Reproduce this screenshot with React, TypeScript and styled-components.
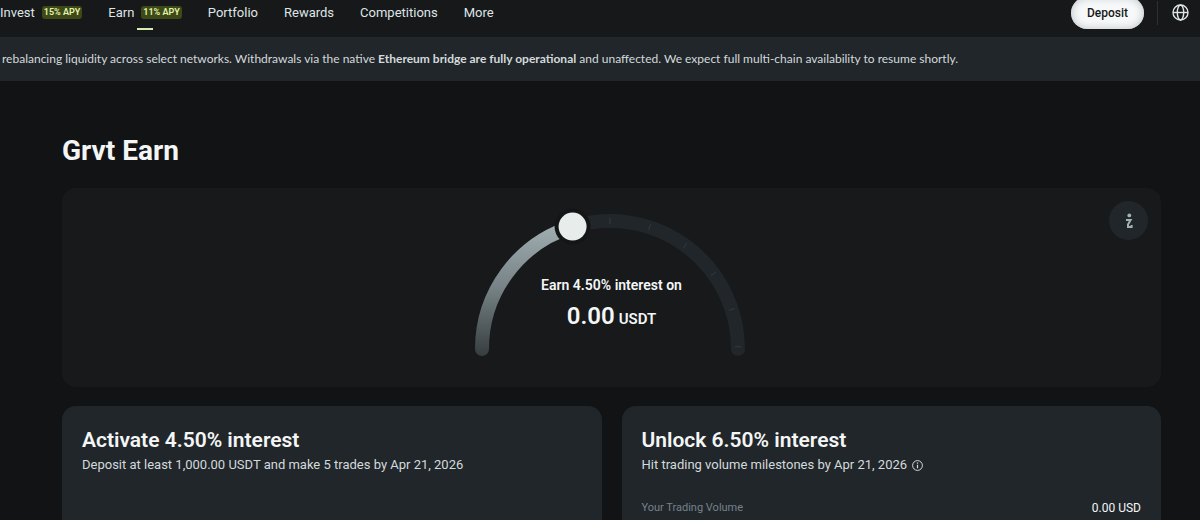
import React from "react";
import styled, { createGlobalStyle } from "styled-components";

const GlobalStyle = createGlobalStyle`
  * { box-sizing: border-box; }
  body {
    margin: 0;
    background: #111315;
    color: #f4f6f6;
    font-family: Roboto, "Liberation Sans", sans-serif;
  }
  h1, h2, p { margin: 0; }
`;

const Page = styled.div`
  display: flex;
  flex-direction: column;
  min-height: 100vh;
`;

const Header = styled.header`
  display: flex;
  align-items: center;
  justify-content: space-between;
  height: 37px;
  padding: 0 11px 12px 0;
  background: #16181a;
`;

const Nav = styled.nav`
  display: flex;
  align-items: center;
  gap: 26px;
`;

const NavLink = styled.a<{ $active?: boolean }>`
  position: relative;
  display: flex;
  align-items: center;
  gap: 7px;
  color: #dfe5e6;
  font-size: 13px;
  line-height: 24px;
  text-decoration: none;
  white-space: nowrap;

  &::after {
    content: "";
    display: ${(p) => (p.$active ? "block" : "none")};
    position: absolute;
    bottom: -5px;
    left: 50%;
    width: 16px;
    height: 2px;
    margin-left: -8px;
    background: #d5edb4;
  }
`;

const ApyBadge = styled.span`
  padding: 0 2px;
  border-radius: 3px;
  background: #3d4a17;
  color: #e6f5ae;
  font-size: 9px;
  font-weight: 600;
  line-height: 13px;
`;

const Actions = styled.div`
  display: flex;
  align-items: center;
`;

const DepositButton = styled.button`
  height: 32px;
  padding: 0 16px;
  border: 0;
  border-radius: 16px;
  background: #f6f8f9;
  box-shadow: inset 0 0 8px #b9c1c5;
  color: #16181a;
  font: 500 12px Roboto, "Liberation Sans", sans-serif;
`;

const Divider = styled.span`
  width: 1px;
  height: 24px;
  margin: 0 14px 0 13px;
  background: #2c3134;
`;

const IconButton = styled.button`
  display: flex;
  padding: 0;
  border: 0;
  background: none;
  color: #dfe5e6;
`;

const Banner = styled.aside`
  padding: 0 2px;
  background: #21262a;
  color: #d3dadc;
  font-family: Lato, Roboto, sans-serif;
  font-size: 12px;
  line-height: 44px;
  white-space: nowrap;

  strong { font-weight: 700; }
`;

const Main = styled.main`
  flex: 1;
  display: flex;
  flex-direction: column;
  padding: 54px 39px 0 62px;
`;

const Title = styled.h1`
  font-size: 28px;
  font-weight: 700;
  line-height: 32px;
`;

const GaugePanel = styled.section`
  position: relative;
  display: flex;
  justify-content: center;
  height: 199px;
  margin-top: 21px;
  padding-right: 4px;
  border-radius: 14px;
  background: #17191b;
`;

const Gauge = styled.svg`
  display: block;
  margin-top: 20px;
`;

const GaugeText = styled.div`
  position: absolute;
  top: 87px;
  left: 0;
  right: 0;
  text-align: center;
`;

const GaugeLabel = styled.p`
  font-size: 14px;
  font-weight: 600;
  line-height: 20px;
`;

const GaugeValue = styled.p`
  margin-top: 5px;
  font-size: 24px;
  font-weight: 600;
  line-height: 32px;

  small { font-size: 15px; margin-left: 4px; }
`;

const InfoButton = styled.button`
  position: absolute;
  top: 13px;
  right: 13px;
  display: flex;
  align-items: center;
  justify-content: center;
  width: 39px;
  height: 39px;
  padding: 0;
  border: 0;
  border-radius: 50%;
  background: #20262a;
  color: #a3b1b6;
`;

const Cards = styled.div`
  flex: 1;
  display: grid;
  grid-template-columns: 1fr 1fr;
  gap: 20px;
  margin-top: 19px;
`;

const Card = styled.section`
  padding: 22px 20px 0 20px;
  border-radius: 14px 14px 0 0;
  background: #21262a;
`;

const CardTitle = styled.h2`
  font-size: 21px;
  font-weight: 600;
  line-height: 24px;
`;

const CardText = styled.p`
  display: flex;
  align-items: center;
  gap: 5px;
  margin-top: 3px;
  color: #d3dadc;
  font-size: 13px;
  line-height: 20px;
`;

const VolumeRow = styled.div`
  display: flex;
  justify-content: space-between;
  margin-top: 25px;
  color: #75838a;
  font-size: 11px;
  line-height: 16px;

  span:last-child { color: #f4f6f6; font-size: 12px; }
`;

const RADIUS = 128;
const CENTER = { x: 135, y: 141 };

function pointAt(degrees: number, radius = RADIUS) {
  const a = (degrees * Math.PI) / 180;
  return { x: CENTER.x + radius * Math.cos(a), y: CENTER.y - radius * Math.sin(a) };
}

function arc(from: number, to: number) {
  const a = pointAt(from);
  const b = pointAt(to);
  return `M${a.x} ${a.y}A${RADIUS} ${RADIUS} 0 0 1 ${b.x} ${b.y}`;
}

const TICKS = [90, 72, 54, 36, 18, 1];

function InterestGauge() {
  const knob = pointAt(107);
  return (
    <Gauge width="270" height="150" viewBox="0 0 270 150" aria-hidden="true">
      <defs>
        <linearGradient id="progress" gradientUnits="userSpaceOnUse" x1="0" y1="10" x2="0" y2="150">
          <stop offset="0" stopColor="#a5b2b6" />
          <stop offset="0.5" stopColor="#768285" />
          <stop offset="1" stopColor="#343b3d" />
        </linearGradient>
      </defs>
      <g fill="none" strokeWidth="14" strokeLinecap="round">
        <path d={arc(107, 0)} stroke="#20262a" />
        <path d={arc(180, 107)} stroke="url(#progress)" />
      </g>
      {TICKS.map((deg) => {
        const a = pointAt(deg, RADIUS - 3);
        const b = pointAt(deg, RADIUS + 3);
        return <line key={deg} x1={a.x} y1={a.y} x2={b.x} y2={b.y} stroke="#343c40" />;
      })}
      <circle cx={knob.x} cy={knob.y} r="18" fill="#131517" />
      <circle cx={knob.x} cy={knob.y} r="14" fill="#e8edec" />
    </Gauge>
  );
}

export default function App() {
  return (
    <>
      <GlobalStyle />
      <Page>
        <Header>
          <Nav>
            <NavLink href="#invest">Invest <ApyBadge>15% APY</ApyBadge></NavLink>
            <NavLink href="#earn" $active>Earn <ApyBadge>11% APY</ApyBadge></NavLink>
            <NavLink href="#portfolio">Portfolio</NavLink>
            <NavLink href="#rewards">Rewards</NavLink>
            <NavLink href="#competitions">Competitions</NavLink>
            <NavLink href="#more">More</NavLink>
          </Nav>
          <Actions>
            <DepositButton type="button">Deposit</DepositButton>
            <Divider />
            <IconButton type="button" aria-label="Language">
              <svg width="17" height="17" viewBox="0 0 17 17" fill="none" stroke="currentColor" strokeWidth="1.4">
                <circle cx="8.5" cy="8.5" r="7.5" />
                <ellipse cx="8.5" cy="8.5" rx="3.2" ry="7.5" />
                <path d="M1 8.5h15" />
              </svg>
            </IconButton>
          </Actions>
        </Header>
        <Banner>
          rebalancing liquidity across select networks. Withdrawals via the native{" "}
          <strong>Ethereum bridge are fully operational</strong> and unaffected. We expect full
          multi-chain availability to resume shortly.
        </Banner>
        <Main>
          <Title>Grvt Earn</Title>
          <GaugePanel>
            <InterestGauge />
            <GaugeText>
              <GaugeLabel>Earn 4.50% interest on</GaugeLabel>
              <GaugeValue>0.00<small>USDT</small></GaugeValue>
            </GaugeText>
            <InfoButton type="button" aria-label="About interest">
              <svg width="8" height="16" viewBox="0 0 8 16" fill="none" stroke="currentColor" strokeWidth="2">
                <circle cx="4.3" cy="2.4" r="1.9" fill="currentColor" stroke="none" />
                <path d="M1 7h4.6L3 11.5V14h3.6v-2" />
              </svg>
            </InfoButton>
          </GaugePanel>
          <Cards>
            <Card>
              <CardTitle>Activate 4.50% interest</CardTitle>
              <CardText>Deposit at least 1,000.00 USDT and make 5 trades by Apr 21, 2026</CardText>
            </Card>
            <Card>
              <CardTitle>Unlock 6.50% interest</CardTitle>
              <CardText>
                Hit trading volume milestones by Apr 21, 2026
                <svg width="11" height="11" viewBox="0 0 11 11" fill="none" stroke="currentColor">
                  <circle cx="5.5" cy="5.5" r="4.9" />
                  <path d="M5.5 4.8v3.4M5.5 2.6v1.2" strokeWidth="1.2" />
                </svg>
              </CardText>
              <VolumeRow>
                <span>Your Trading Volume</span>
                <span>0.00 USD</span>
              </VolumeRow>
            </Card>
          </Cards>
        </Main>
      </Page>
    </>
  );
}
